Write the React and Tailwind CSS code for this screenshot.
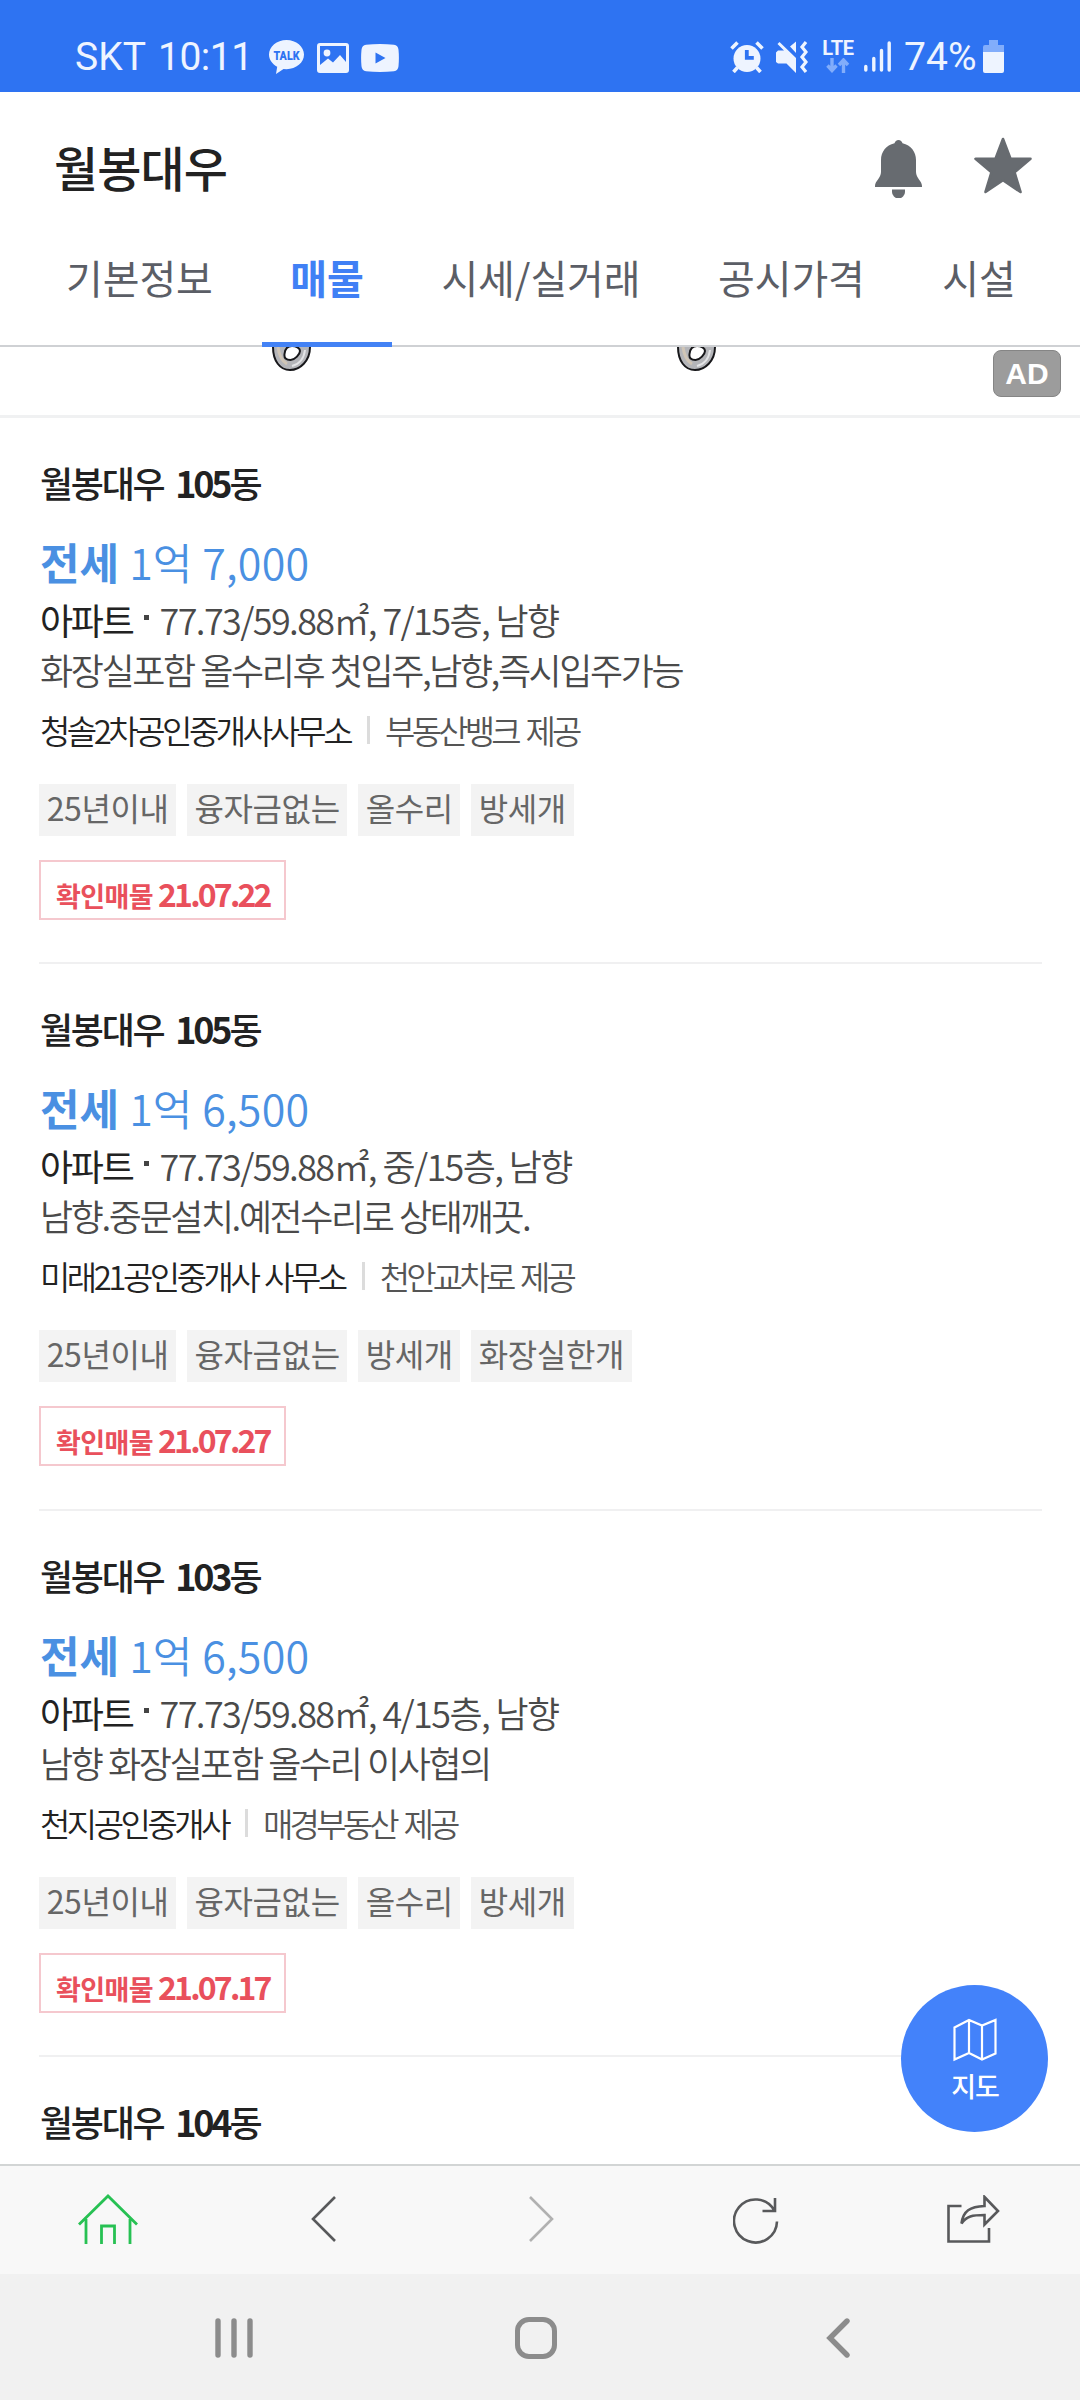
const tabs = ["기본정보", "매물", "시세/실거래", "공시가격", "시설"];

const listings = [
 {
  dong: "105",
  price: "7,000",
  floor: "7/15층",
  desc: "화장실포함 올수리후 첫입주,남향,즉시입주가능",
  office: "청솔2차공인중개사사무소",
  source: "부동산뱅크 제공",
  tags: ["25년이내", "융자금없는", "올수리", "방세개"],
  date: "21.07.22",
 },
 {
  dong: "105",
  price: "6,500",
  floor: "중/15층",
  desc: "남향.중문설치.예전수리로 상태깨끗.",
  office: "미래21공인중개사 사무소",
  source: "천안교차로 제공",
  tags: ["25년이내", "융자금없는", "방세개", "화장실한개"],
  date: "21.07.27",
 },
 {
  dong: "103",
  price: "6,500",
  floor: "4/15층",
  desc: "남향 화장실포함 올수리 이사협의",
  office: "천지공인중개사",
  source: "매경부동산 제공",
  tags: ["25년이내", "융자금없는", "올수리", "방세개"],
  date: "21.07.17",
 },
];

function StatusBar() {
 return (
  <div className="flex h-[92px] shrink-0 items-center bg-[#2e73f2] pt-[23px] pr-[76px] pl-[75px] font-[Roboto,sans-serif] text-[#eef4ff]">
   <span className="w-[83px] text-[39px] leading-none">SKT</span>
   <span className="w-[111px] text-[39px] leading-none tracking-[-0.5px] whitespace-nowrap">10:11</span>

   <svg width="35" height="34" viewBox="0 0 35 34" className="relative -top-px">
    <path d="M17.500 0C27.200 0 35 6.500 35 14.600S27.200 29.200 17.500 29.200l-3-.2L7 34l1.200-7.200C3.300 24.200 0 19.700 0 14.600 0 6.500 7.800 0 17.500 0z" fill="currentColor" />
    <text x="17.500" y="19.500" textAnchor="middle" fontSize="12.500" fontWeight="900" textLength="26" lengthAdjust="spacingAndGlyphs" fill="#2e73f2">TALK</text>
   </svg>

   <svg width="32" height="30" viewBox="0 0 32 30" className="ml-[13px]">
    <path fillRule="evenodd" d="M3 0h26a3 3 0 013 3v24a3 3 0 01-3 3H3a3 3 0 01-3-3V3a3 3 0 013-3zM3 3v19l8-6.500 5 4 7-7.500 6 7V3z" fill="currentColor" />
    <circle cx="10" cy="10" r="3.400" fill="currentColor" />
   </svg>

   <svg width="38" height="28" viewBox="0 0 38 28" className="ml-[12px]">
    <path fillRule="evenodd" d="M5 .8Q19-.6 33 .8q4 .5 4.500 5 .8 8 0 16.400-.5 4.500-4.500 5-14 1.400-28 0-4-.5-4.500-5-.8-8.400 0-16.400.5-4.500 4.500-5zM14.500 8.500v11l10-5.500z" fill="currentColor" />
   </svg>

   <div className="ml-auto flex items-center">
    <svg width="34" height="32" viewBox="0 0 34 32" className="relative -top-px">
     <circle cx="17" cy="17.500" r="13.500" fill="currentColor" />
     <path d="M1.500 7.500l6-6M26.500 1.500l6 6M7.500 26.500l-4 4.500M26.500 26.500l4 4.500" stroke="currentColor" strokeWidth="3.600" />
     <path d="M16.800 9v7.800h7" stroke="#2e73f2" strokeWidth="3.800" fill="none" />
    </svg>
    <svg width="32" height="32" viewBox="0 0 32 32" className="relative -top-px ml-[12px]">
     <path d="M3.500 1L20 17v15L10.500 22.500H2L0 21V11.500L2 9.500h6L1.500 3zM20 .5V12l-6-6.500z" fill="currentColor" />
     <path d="M30 1l-4 5 4 5-4 5 4 5-4 5 4 5" fill="none" stroke="currentColor" strokeWidth="3.200" />
    </svg>
    <div className="relative -top-[2px] ml-[13px] flex w-[34px] flex-col items-center">
     <span className="text-[20px] font-bold leading-[19px] tracking-[-0.3px]">LTE</span>
     <svg width="24" height="15" viewBox="0 0 24 15" className="text-[#82adfb]">
      <path d="M6 0v12M1.500 7.500L6 12.500l4.500-5M17.500 15V2M13 7l4.500-5L22 7" fill="none" stroke="currentColor" strokeWidth="3.400" />
     </svg>
    </div>
    <svg width="27" height="31" viewBox="0 0 27 31" className="relative -top-px ml-[9px]">
     <path d="M1.800 25.500v3.500M9.800 17.500V29M17.500 9.500V29M25.200 2v27" stroke="currentColor" strokeWidth="3.400" strokeLinecap="round" />
    </svg>
    <span className="ml-[13px] w-[79px] text-[39px] leading-none tracking-[0.1px] whitespace-nowrap">74%</span>
    <svg width="21" height="33" viewBox="0 0 21 33" className="relative -top-[1px]">
     <path d="M6 0h9v5h6v7H0V7q0-2 2-2h4z" fill="#82adfb" />
     <path d="M0 12h21v19q0 2-2 2H2q-2 0-2-2z" fill="currentColor" />
    </svg>
   </div>
  </div>
 );
}

function Header() {
 return (
  <header className="h-[255px] shrink-0 border-b-2 border-[#cfd1d4] bg-white">
   <div className="flex h-[122px] items-start justify-between pt-[44px] pr-[48px] pl-[54px]">
    <h1 className="text-[48px] font-medium leading-[60px] tracking-[-0.9px] text-[#222]">월봉대우</h1>
    <div className="flex items-start gap-[52px] text-[#676b70]">
     <svg width="47" height="58" viewBox="0 0 47 58" className="mt-[4px]">
      <path d="M23.500 0c2 0 3.500 1.500 4 3.200C36 5 41 12 41 20v12c0 6 6 9 6 14v1H0v-1c0-5 6-8 6-14V20C6 12 11 5 19.500 3.200 20 1.500 21.500 0 23.500 0z" fill="currentColor" />
      <path d="M17 49.500h13V52a6.500 6.500 0 01-13 0z" fill="currentColor" />
     </svg>
     <svg width="58" height="57" viewBox="0 0 58 57" className="mt-px">
      <path d="M29 2l7.500 19.800H56.500L40.500 35.200 46.500 55 29 43.200 11.500 55l6-19.800L1.500 21.800h20z" fill="currentColor" stroke="currentColor" strokeWidth="2.600" strokeLinejoin="round" />
     </svg>
    </div>
   </div>
   <nav className="flex h-[133px] gap-[21.5px] pl-[38px]">
    {tabs.map((tab) =>
     tab === "매물" ? (
      <div key={tab} className="box-border border-b-[5px] border-[#4382f5] px-[28px] pt-[35px] text-[40px] font-bold leading-[56px] text-[#4080f5]">
       {tab}
      </div>
     ) : (
      <div key={tab} className="px-[28px] pt-[35px] text-[40px] leading-[56px] tracking-[-0.1px] whitespace-nowrap text-[#5b5e66]">
       {tab}
      </div>
     )
    )}
   </nav>
  </header>
 );
}

function Balloon() {
 return (
  <svg width="39" height="24" viewBox="0 0 39 24">
   <path d="M1 0C1 14 8 23 18 23S38 14 38 0" fill="#b4b5b9" stroke="#17171a" strokeWidth="2" />
   <path d="M6 0c1 8 4 14 9 17" fill="none" stroke="#d0c5b6" strokeWidth="3" />
   <path d="M20 19c8-2 12-8 13-16" fill="none" stroke="#e4e5e7" strokeWidth="2" />
   <path d="M12.500 7C13 2 16-1 20-1s8 2 8 5-5 9-9.500 9-6.500-2-6-6z" fill="#fff" stroke="#17171a" strokeWidth="2" />
  </svg>
 );
}

function Banner() {
 return (
  <div className="flex h-[71px] shrink-0 items-start border-b-[3px] border-[#f0f1f2] pr-[19px] pl-[272px]">
   <Balloon />
   <div className="ml-[366px]">
    <Balloon />
   </div>
   <div className="mt-[3px] ml-auto flex h-[47px] w-[68px] items-center justify-center rounded-[8px] border border-[#858585] bg-[#9c9c9c] font-['Liberation_Sans',Arial,sans-serif] text-[30px] font-bold leading-none text-white">
    AD
   </div>
  </div>
 );
}

function ListingTitle({ dong }) {
 return (
  <h2 className="text-[36px] font-medium leading-[54px] tracking-[-2.3px] text-[#222]">
   월봉대우<span className="ml-[12px] font-bold tracking-[-3.2px]">{dong}</span>동
  </h2>
 );
}

function Listing({ item }) {
 return (
  <article className="mr-[38px] ml-[39px] h-[546.4px] shrink-0 border-b-2 border-[#f0f0f1] pt-[37px] whitespace-nowrap">
   <div className="pl-px">
    <ListingTitle dong={item.dong} />
    <p className="mt-[22px] flex gap-[10px] text-[43px] leading-[60px] text-[#4a90e2]">
     <strong className="font-bold">전세</strong>
     <span className="font-[350]">1억</span>
     <span className="font-[350] tracking-[0.2px]">{item.price}</span>
    </p>
    <p className="mt-[4px] flex text-[36px] leading-[49px] text-[#4a4a4a]">
     <span className="tracking-[-2.3px] text-[#222]">아파트</span>
     <i className="mt-[20px] mr-[10px] ml-[12px] size-[5px] bg-[#444]" />
     <span className="font-[350] tracking-[-1.6px]">77.73/59.88㎡, {item.floor}, 남향</span>
    </p>
    <p className="text-[36px] font-[350] leading-[50px] tracking-[-2.4px] text-[#4a4a4a] [word-spacing:1px]">{item.desc}</p>
    <p className="mt-[16px] flex items-center text-[33px] font-[350] leading-[40px]">
     <span className="tracking-[-3.5px] text-[#222] [word-spacing:3px]">{item.office}</span>
     <i className="mr-[15px] ml-[17px] h-[28px] w-[3px] bg-[#dcdcdc]" />
     <span className="tracking-[-3.8px] text-[#555] [word-spacing:4px]">{item.source}</span>
    </p>
   </div>
   <ul className="mt-[34px] flex gap-[10.600px]">
    {item.tags.map((tag) => (
     <li key={tag} className="h-[52px] bg-[#f3f3f3] px-[7.700px] text-[32px] leading-[46px] tracking-[-0.4px] text-[#666]">
      {tag}
     </li>
    ))}
   </ul>
   <div className="mt-[24px] flex h-[60px] w-[247px] items-baseline border-2 border-[#f5c8ce] pl-[15px] font-bold leading-[62px] text-[#e9505c]">
    <span className="text-[27px] tracking-[-0.6px]">확인매물</span>
    <span className="ml-[5px] text-[32px] tracking-[-2.8px]">{item.date}</span>
   </div>
  </article>
 );
}

function Toolbar() {
 return (
  <div className="grid h-[110px] shrink-0 grid-cols-5 items-center justify-items-center border-t-2 border-[#d2d5d5] bg-[#f8f8f8] pb-[2px] text-[#58595b]">
   <svg width="60" height="50" viewBox="0 0 60 50" fill="none" stroke="#27c153" strokeWidth="2.800">
    <path d="M1 30.500L30 2l29 28.500M8 25v25M52 25v25M23.500 50V32h13v18" />
   </svg>
   <svg width="25" height="46" viewBox="0 0 25 46" fill="none" stroke="currentColor" strokeWidth="2.600" className="relative -left-px">
    <path d="M24 1L2 23l22 22" />
   </svg>
   <svg width="25" height="46" viewBox="0 0 25 46" fill="none" stroke="#b1b1b1" strokeWidth="2.600" className="relative left-px">
    <path d="M1 1l22 22L1 45" />
   </svg>
   <svg width="46" height="48" viewBox="0 0 46 48" fill="none" stroke="currentColor" strokeWidth="2.600" className="relative top-[2px]">
    <path d="M44 24.500a21.500 21.500 0 11-3-11.500M42 1v13H29.500" />
   </svg>
   <svg width="53" height="48" viewBox="0 0 53 48" fill="none" stroke="currentColor" strokeWidth="2.600" className="relative left-px">
    <path d="M14.500 11H1.500v35.500h40.500V33M37.500 2L51 16 37.500 29.500V20c-12 0-18 1-23 8.500C16 16 23 11.500 37.500 11z" />
   </svg>
  </div>
 );
}

function SystemNav() {
 return (
  <div className="grid h-[126px] shrink-0 grid-cols-3 items-center justify-items-center bg-[#f1f1f1] pt-[2px] pr-[91px] pl-[83px] text-[#8c8c8c]">
   <svg width="38" height="42" viewBox="0 0 38 42" stroke="currentColor" strokeWidth="5.400" strokeLinecap="round">
    <path d="M3 4v34M19 4v34M35 4v34" />
   </svg>
   <div className="size-[42px] rounded-[14px] border-[5px] border-current" />
   <svg width="24" height="42" viewBox="0 0 24 42" fill="none" stroke="currentColor" strokeWidth="5.400" strokeLinecap="round">
    <path d="M21 4L4 21l17 17" />
   </svg>
  </div>
 );
}

function MapButton() {
 return (
  <button className="absolute top-[1985px] left-[901px] flex size-[147px] flex-col items-center rounded-full bg-[#4382fa] pt-[33px] text-white">
   <svg width="44" height="44" viewBox="0 0 44 44" fill="none" stroke="currentColor" strokeWidth="2.200">
    <path d="M1.500 9.500L16 2l13 5.500L42.500 2v33.500L29 41.500 16 35 1.500 41.500zM16 2v33M29 7.500v34" />
   </svg>
   <span className="mt-[6px] pl-px text-[27px] font-medium leading-[36px] tracking-[-1px]">지도</span>
  </button>
 );
}

export default function App() {
 return (
  <div className="relative flex h-[2400px] w-[1080px] flex-col overflow-hidden bg-white font-['Noto_Sans_CJK_KR',sans-serif]">
   <StatusBar />
   <Header />
   <Banner />
   <main className="flex flex-1 flex-col overflow-hidden">
    {listings.map((item, i) => (
     <Listing key={i} item={item} />
    ))}
    <div className="mx-[40px] shrink-0 pt-[37px]">
     <ListingTitle dong="104" />
    </div>
   </main>
   <Toolbar />
   <SystemNav />
   <MapButton />
  </div>
 );
}
